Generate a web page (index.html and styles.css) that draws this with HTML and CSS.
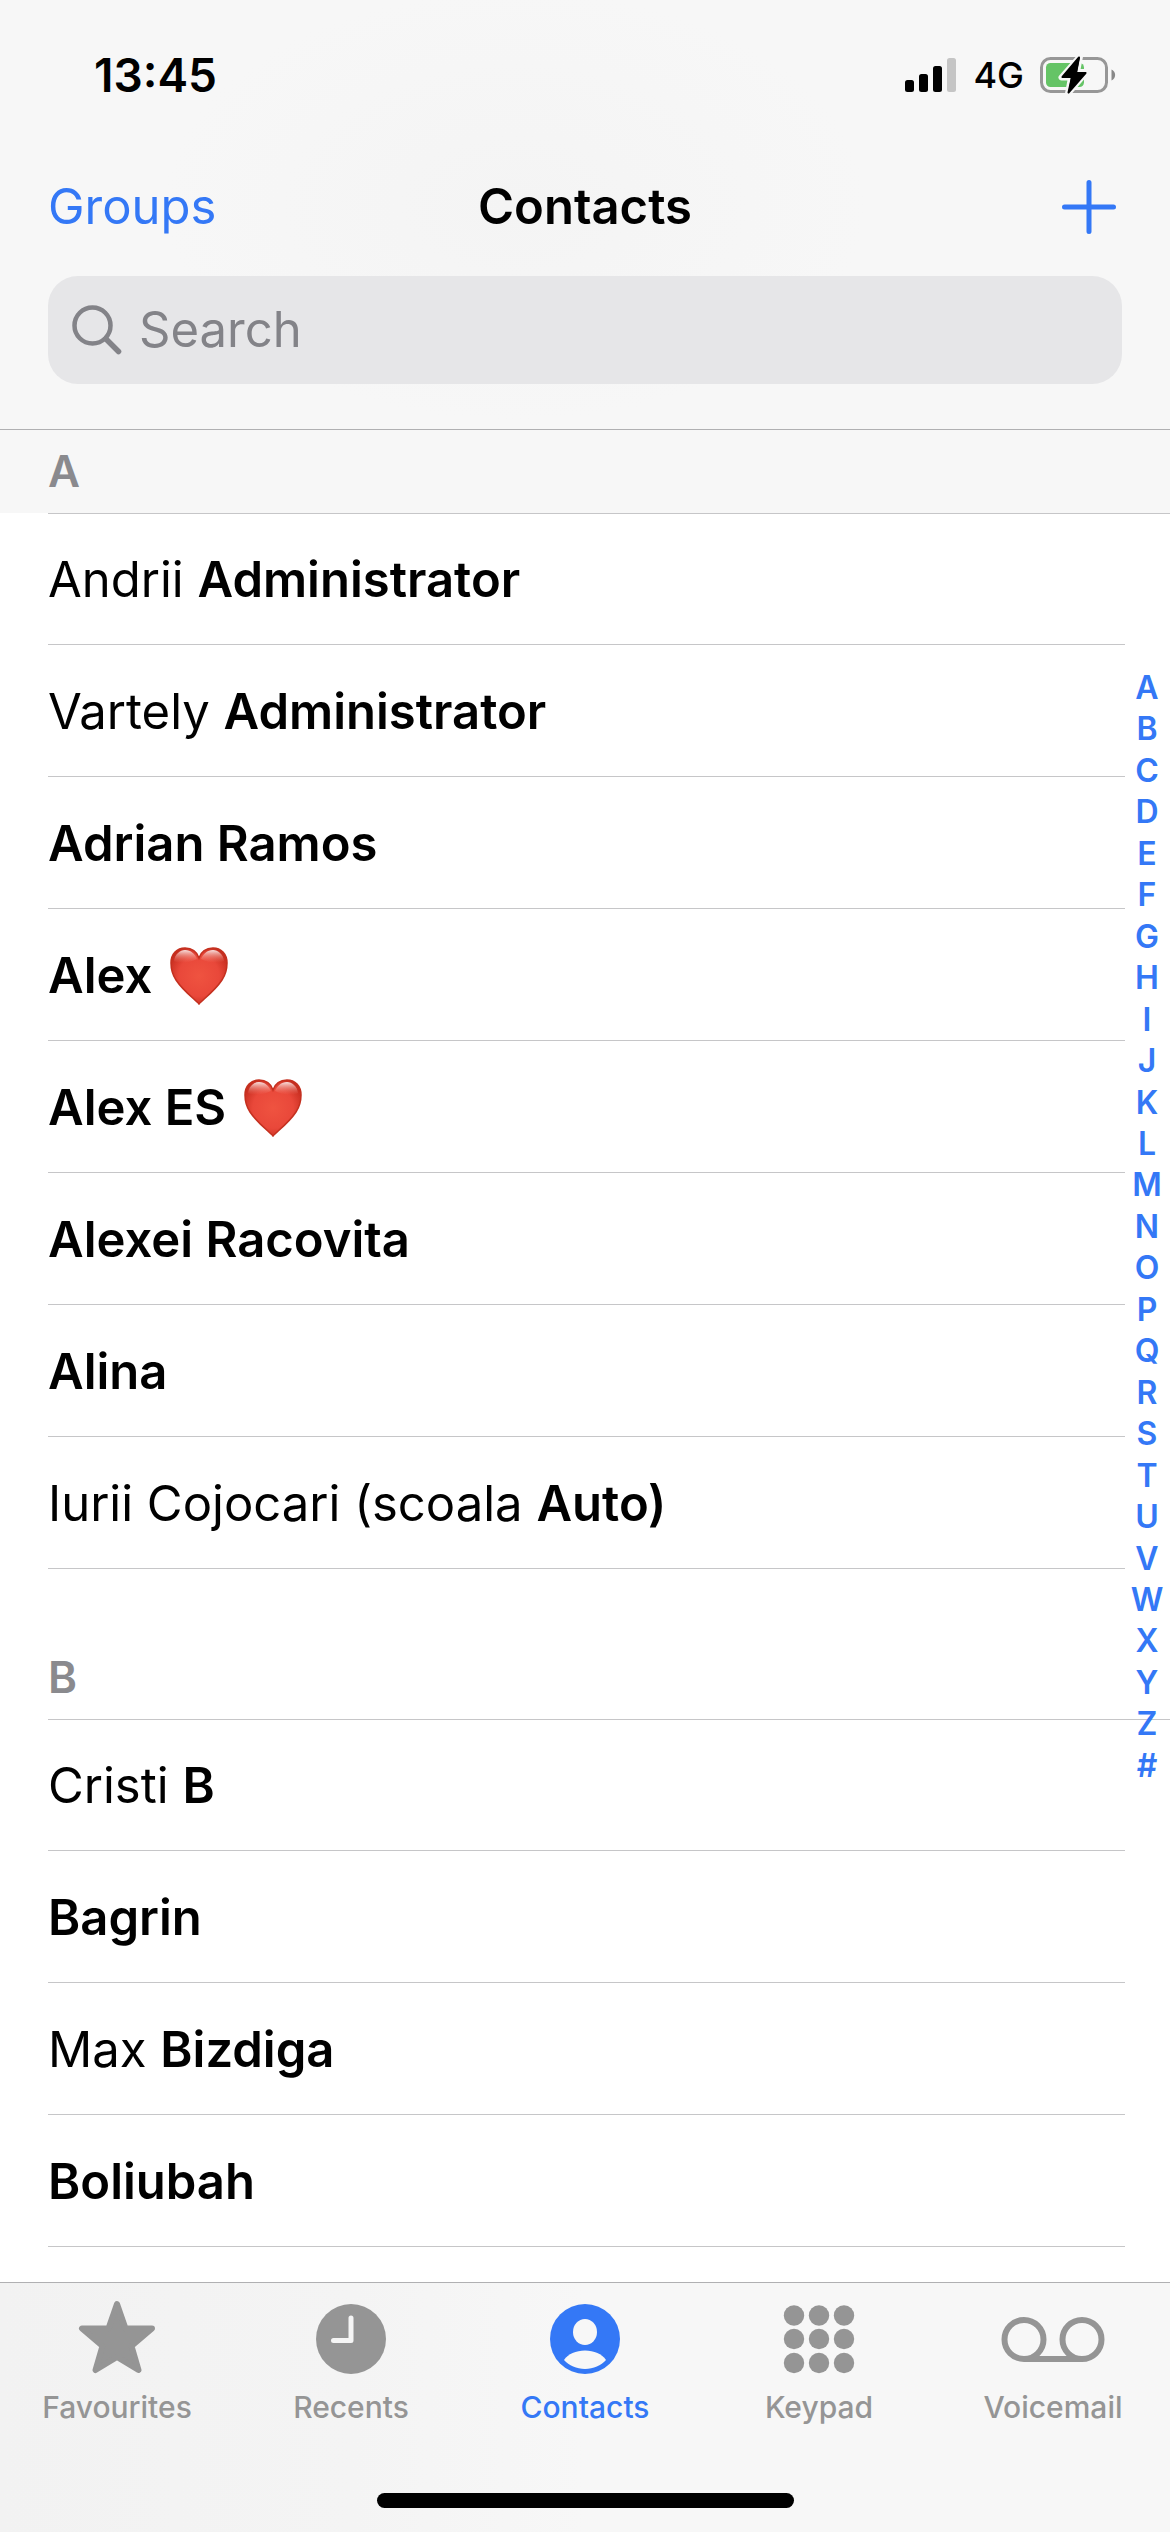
FILE: index.html
```html
<!DOCTYPE html>
<html lang="en-GB">
<head>
<meta charset="utf-8">
<meta name="viewport" content="width=device-width, initial-scale=1">
<title>Contacts</title>
<link rel="stylesheet" href="styles.css">
</head>
<body>
<svg class="defs" aria-hidden="true">
  <defs>
    <radialGradient id="heart-fill" cx="0.5" cy="0.5" r="0.6">
      <stop offset="0" stop-color="#ef5340"/>
      <stop offset="0.6" stop-color="#e9483a"/>
      <stop offset="1" stop-color="#c22a1c"/>
    </radialGradient>
    <linearGradient id="heart-shine" x1="0" y1="0" x2="0" y2="1">
      <stop offset="0" stop-color="#fff" stop-opacity="0.85"/>
      <stop offset="1" stop-color="#f08070" stop-opacity="0"/>
    </linearGradient>
    <symbol id="heart" viewBox="0 0 58 58">
      <path d="M29 57C26 53 14 45 6 33C2 27 1 21 1 16C1 7 7 1 15 1C22 1 27 5 29 11C31 5 36 1 43 1C51 1 57 7 57 16C57 21 56 27 52 33C44 45 32 53 29 57Z" fill="url(#heart-fill)" stroke="#c4301f" stroke-width="1.5"/>
      <path d="M4 14C5 7 10 3 15 3C21 3 25 7 27 12C20 16 9 17 4 14Z" fill="url(#heart-shine)"/>
      <path d="M54 14C53 7 48 3 43 3C37 3 33 7 31 12C38 16 49 17 54 14Z" fill="url(#heart-shine)"/>
    </symbol>
  </defs>
</svg>
<div class="app">
  <header class="top">
    <div class="status">
      <time class="clock">13:45</time>
      <div class="signals">
        <svg class="bars" viewBox="0 0 52 34" role="img" aria-label="Signal, three of four bars">
          <rect x="0" y="22" width="9" height="12" rx="2.5"/>
          <rect x="14" y="16" width="9" height="18" rx="2.5"/>
          <rect x="28" y="8" width="9" height="26" rx="2.5"/>
          <rect x="42" y="0" width="9" height="34" rx="2.5" fill="#c5c5c5"/>
        </svg>
        <span class="network">4G</span>
        <svg class="battery" viewBox="0 0 76 38" role="img" aria-label="Battery charging">
          <rect x="1.5" y="2.5" width="65" height="33" rx="9" fill="none" stroke="#979797" stroke-width="3"/>
          <path d="M71.5 13.5A6 6 0 0 1 71.5 24.5Z" fill="#888"/>
          <rect x="6" y="7" width="38" height="24" rx="4.5" fill="#65c466"/>
          <path d="M40 0.5L21.5 21.5H31L28 37.500L46.500 16H37Z" fill="#000" stroke="#f7f7f7" stroke-width="6" stroke-linejoin="round" paint-order="stroke"/>
          <path d="M39 1.500L22.500 21H32L28.500 36.500L45.500 17H36Z" fill="#000" stroke="#000" stroke-width="2" stroke-linejoin="round"/>
        </svg>
      </div>
    </div>
    <div class="navbar">
      <button class="groups" type="button">Groups</button>
      <h1 class="title">Contacts</h1>
      <button class="add" type="button" aria-label="Add contact">
        <svg class="plus" viewBox="0 0 54 54" aria-hidden="true"><path d="M27 2.500V51.500M2.500 27H51.500" fill="none" stroke="currentColor" stroke-width="5" stroke-linecap="round"/></svg>
      </button>
    </div>
    <label class="search">
      <svg class="lens" viewBox="0 0 50 50" aria-hidden="true"><circle cx="20.500" cy="20.500" r="18" fill="none" stroke="currentColor" stroke-width="4.500"/><path d="M34 34L46.500 46.500" stroke="currentColor" stroke-width="5.500" stroke-linecap="round"/></svg>
      <input class="search-input" type="search" placeholder="Search" aria-label="Search">
    </label>
  </header>

  <main class="contacts">
    <section id="A">
      <h2 class="letter letter-pinned"><span class="letter-text">A</span></h2>
      <ul class="names">
        <li class="name">Andrii <b>Administrator</b></li>
        <li class="name">Vartely <b>Administrator</b></li>
        <li class="name"><b>Adrian Ramos</b></li>
        <li class="name"><b>Alex</b><svg class="heart" role="img" aria-label="red heart"><use href="#heart"/></svg></li>
        <li class="name"><b>Alex ES</b><svg class="heart" role="img" aria-label="red heart"><use href="#heart"/></svg></li>
        <li class="name"><b>Alexei Racovita</b></li>
        <li class="name"><b>Alina</b></li>
        <li class="name">Iurii Cojocari (scoala <b>Auto)</b></li>
      </ul>
    </section>
    <section id="B">
      <h2 class="letter letter-spaced"><span class="letter-text">B</span></h2>
      <ul class="names">
        <li class="name">Cristi <b>B</b></li>
        <li class="name"><b>Bagrin</b></li>
        <li class="name">Max <b>Bizdiga</b></li>
        <li class="name"><b>Boliubah</b></li>
      </ul>
    </section>
    <nav class="index" aria-label="Jump to letter">
      <a href="#A">A</a><a href="#B">B</a><a href="#C">C</a><a href="#D">D</a><a href="#E">E</a><a href="#F">F</a><a href="#G">G</a><a href="#H">H</a><a href="#I">I</a><a href="#J">J</a><a href="#K">K</a><a href="#L">L</a><a href="#M">M</a><a href="#N">N</a><a href="#O">O</a><a href="#P">P</a><a href="#Q">Q</a><a href="#R">R</a><a href="#S">S</a><a href="#T">T</a><a href="#U">U</a><a href="#V">V</a><a href="#W">W</a><a href="#X">X</a><a href="#Y">Y</a><a href="#Z">Z</a><a href="#other">#</a>
    </nav>
  </main>

  <footer class="bottom">
    <nav class="tabs" aria-label="Phone">
      <a class="tab" href="#favourites">
        <svg class="tab-icon" viewBox="0 0 108 74" aria-hidden="true"><path d="M54 4L62.500 28.500H89L68.500 46L75.500 70L54 57L32.500 70L39.500 46L19 28.500H45.500Z" fill="currentColor" stroke="currentColor" stroke-width="6" stroke-linejoin="round"/></svg>
        <span>Favourites</span>
      </a>
      <a class="tab" href="#recents">
        <svg class="tab-icon" viewBox="0 0 108 74" aria-hidden="true"><circle cx="54" cy="39" r="35" fill="currentColor"/><path d="M54 18V40.500H36.500" fill="none" stroke="#f5f5f5" stroke-width="5" stroke-linecap="round" stroke-linejoin="round"/></svg>
        <span>Recents</span>
      </a>
      <a class="tab tab-current" href="#contacts" aria-current="page">
        <svg class="tab-icon" viewBox="0 0 108 74" aria-hidden="true"><circle cx="54" cy="39" r="35" fill="currentColor"/><ellipse cx="54" cy="32" rx="12" ry="13" fill="#f7f7f7"/><path d="M33 60C37 54 45 50.500 54 50.500S71 54 75 60C70 65.500 62.500 69 54 69S38 65.500 33 60Z" fill="#f7f7f7"/></svg>
        <span>Contacts</span>
      </a>
      <a class="tab" href="#keypad">
        <svg class="tab-icon" viewBox="0 0 108 74" aria-hidden="true"><g fill="currentColor"><circle cx="29" cy="15.500" r="10.200"/><circle cx="54" cy="15.500" r="10.200"/><circle cx="79" cy="15.500" r="10.200"/><circle cx="29" cy="39" r="10.200"/><circle cx="54" cy="39" r="10.200"/><circle cx="79" cy="39" r="10.200"/><circle cx="29" cy="63" r="10.200"/><circle cx="54" cy="63" r="10.200"/><circle cx="79" cy="63" r="10.200"/></g></svg>
        <span>Keypad</span>
      </a>
      <a class="tab" href="#voicemail">
        <svg class="tab-icon" viewBox="0 0 108 74" aria-hidden="true"><g fill="none" stroke="currentColor" stroke-width="6"><circle cx="25" cy="39.500" r="19.500"/><circle cx="83" cy="39.500" r="19.500"/><path d="M25 59H83"/></g></svg>
        <span>Voicemail</span>
      </a>
    </nav>
    <div class="home"></div>
  </footer>
</div>
</body>
</html>
```
FILE: styles.css
```css
:root {
  --blue: #3478f6;
  --bar: #f7f7f7;
  --line: #c6c6c8;
  --bar-line: #b0b0b2;
  --grey: #838388;
}

* {
  box-sizing: border-box;
}

body {
  margin: 0;
  background: #fff;
  color: #000;
  font-family: Inter, "Liberation Sans", sans-serif;
  font-size: 49px;
  line-height: 60px;
}

button {
  padding: 0;
  border: 0;
  background: none;
  color: var(--blue);
  font: inherit;
}

a {
  color: inherit;
  text-decoration: none;
}

svg {
  display: block;
}

.defs {
  position: absolute;
  width: 0;
  height: 0;
}

.app {
  display: flex;
  flex-direction: column;
  min-height: 100vh;
}

/* Top bar */

.top {
  padding: 0 48px 45px;
  border-bottom: 1px solid var(--bar-line);
  background: radial-gradient(ellipse 30% 50% at 44% 48%, #f4f4f4, var(--bar));
}

.status {
  display: flex;
  align-items: center;
  justify-content: space-between;
  height: 150px;
  padding-left: 46px;
  padding-right: 6px;
}

.clock {
  font-size: 46px;
  font-weight: 600;
}

.signals {
  display: flex;
  align-items: center;
  gap: 16px;
}

.bars {
  width: 52px;
  height: 34px;
}

.network {
  font-size: 36px;
  font-weight: 500;
}

.battery {
  width: 76px;
  height: 38px;
}

.navbar {
  display: grid;
  grid-template-columns: 1fr auto 1fr;
  align-items: center;
  height: 126px;
  padding-bottom: 12px;
}

.groups {
  justify-self: start;
}

.title {
  margin: 0;
  font-size: 49px;
  font-weight: 600;
}

.add {
  justify-self: end;
  padding-right: 6px;
}

.plus {
  width: 54px;
  height: 54px;
}

.search {
  display: flex;
  align-items: center;
  gap: 17px;
  height: 108px;
  padding: 0 24px;
  border-radius: 30px;
  background: #e6e6e8;
  color: var(--grey);
}

.lens {
  flex: none;
  width: 50px;
  height: 50px;
}

.search-input {
  flex: 1;
  min-width: 0;
  padding: 0;
  border: 0;
  outline: 0;
  background: none;
  color: #000;
  font: inherit;
  appearance: none;
}

.search-input::placeholder {
  color: var(--grey);
  opacity: 1;
}

/* Contact list */

.contacts {
  position: relative;
  flex: 1;
}

.letter {
  margin: 0;
  padding-left: 48px;
  color: #8a8a8e;
  font-size: 44px;
  font-weight: 600;
}

.letter-text {
  display: block;
  padding: 11px 0 12px;
  border-bottom: 1px solid var(--line);
}

.letter-pinned {
  background: linear-gradient(var(--bar), var(--bar)) no-repeat 0 0 / 100% 83px;
}

.letter-spaced {
  padding-top: 67px;
}

.names {
  margin: 0;
  padding: 0 45px 0 48px;
  list-style: none;
}

.name {
  display: flex;
  align-items: center;
  height: 132px;
  padding-top: 2px;
  border-bottom: 1px solid var(--line);
  white-space: pre;
}

.name:first-child {
  height: 131px;
}

.name b {
  font-weight: 600;
}

.heart {
  width: 58px;
  height: 58px;
  margin-left: 18px;
}

.index {
  position: absolute;
  top: 238px;
  right: 0;
  display: flex;
  flex-direction: column;
  justify-content: space-between;
  width: 46px;
  height: 1118px;
  color: var(--blue);
  font-size: 32px;
  font-weight: 600;
  line-height: 40px;
  text-align: center;
}

/* Tab bar */

.bottom {
  padding-bottom: 24px;
  border-top: 1px solid var(--bar-line);
  background: linear-gradient(90deg, #f2f2f2, #f4f4f4 30%, var(--bar) 50%);
}

.tabs {
  display: grid;
  grid-template-columns: repeat(5, 1fr);
  padding-top: 17px;
}

.tab {
  display: flex;
  flex-direction: column;
  align-items: center;
  gap: 15px;
  color: #959595;
  font-size: 30px;
  font-weight: 500;
  line-height: 36px;
}

.tab-current {
  color: var(--blue);
}

.tab-icon {
  width: 108px;
  height: 74px;
}

.home {
  width: 417px;
  height: 15px;
  margin: 68px auto 0;
  border-radius: 8px;
  background: #000;
}
```
